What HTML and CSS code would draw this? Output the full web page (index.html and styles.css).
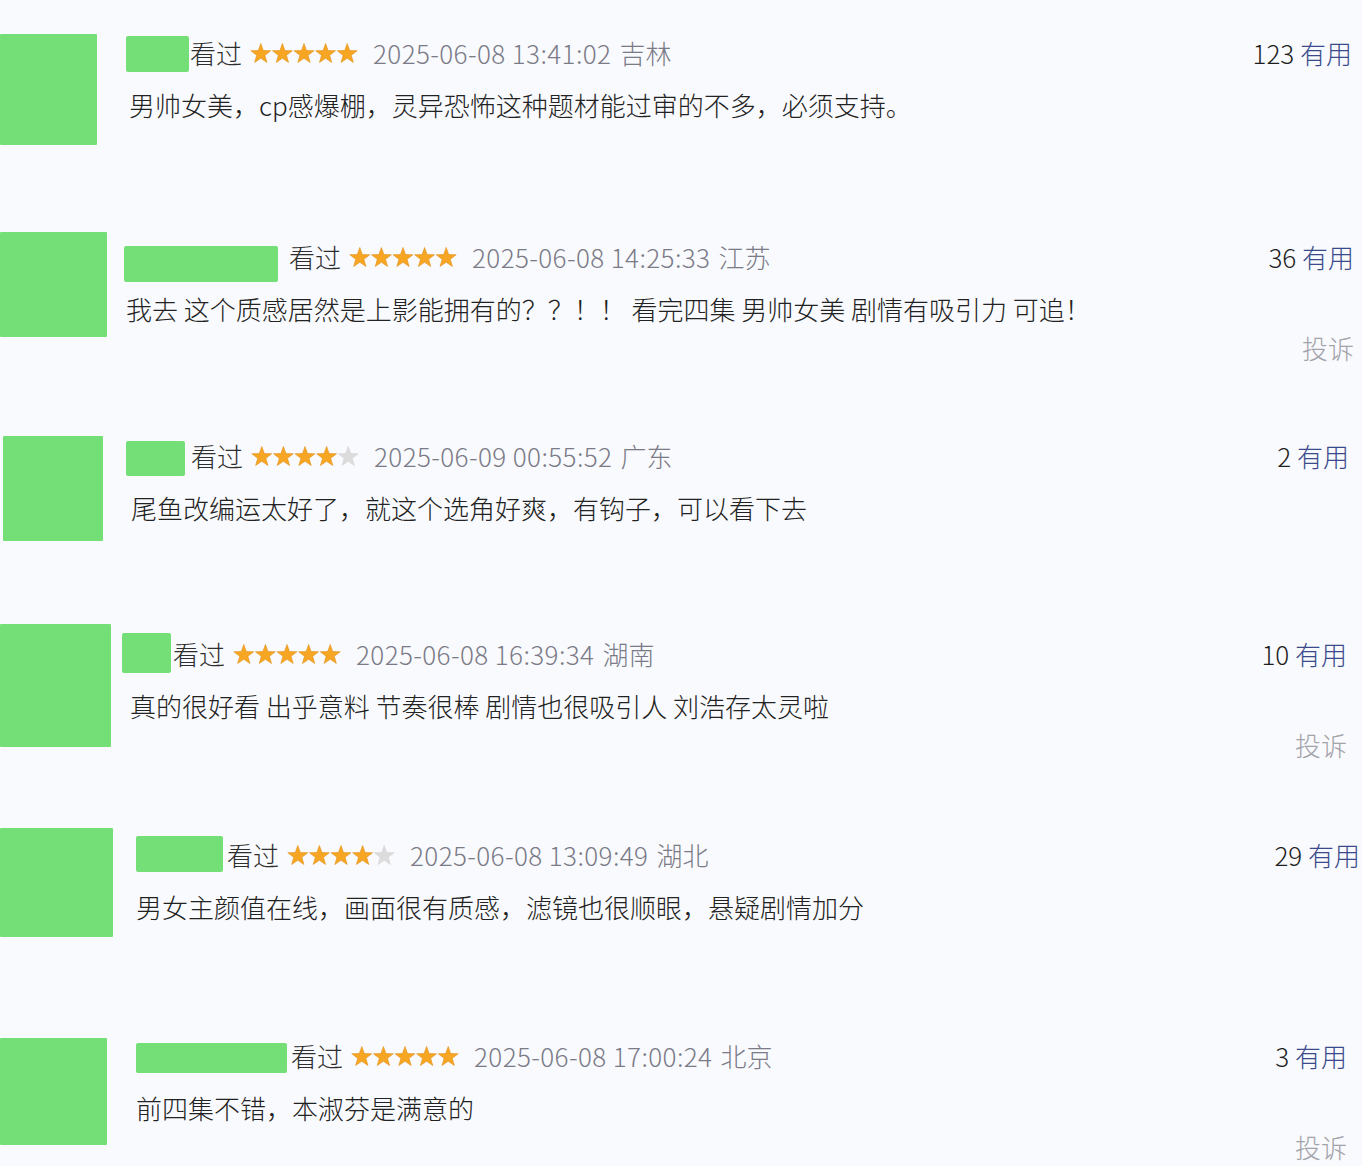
FILE: index.html
```html
<!DOCTYPE html>
<html lang="zh-CN">
<head>
<meta charset="utf-8">
<title>短评</title>
<link rel="stylesheet" href="styles.css">
</head>
<body>
<svg class="defs" width="0" height="0" aria-hidden="true">
  <defs>
    <path id="st" d="M0,-10.5 L2.53,-3.48 L9.99,-3.25 L4.09,1.33 L6.17,8.5 L0,4.3 L-6.17,8.5 L-4.09,1.33 L-9.99,-3.25 L-2.53,-3.48Z"/>
  </defs>
</svg>
<div class="list">

  <div class="item r1">
    <div class="avatar"></div>
    <div class="main">
      <div class="head">
        <span class="name"></span><span class="seen">看过</span>
        <svg class="stars" viewBox="0 0 108 21" width="108" height="21"><use href="#st" class="on" x="10.8" y="11"/><use href="#st" class="on" x="32.4" y="11"/><use href="#st" class="on" x="54" y="11"/><use href="#st" class="on" x="75.6" y="11"/><use href="#st" class="on" x="97.2" y="11"/></svg>
        <span class="time">2025-06-08 13:41:02</span><span class="loc">吉林</span>
      </div>
      <p class="text">男帅女美，cp感爆棚，灵异恐怖这种题材能过审的不多，必须支持。</p>
    </div>
    <div class="side">
      <div class="vote"><span class="num">123</span> <span class="useful">有用</span></div>
    </div>
  </div>

  <div class="item r2">
    <div class="avatar"></div>
    <div class="main">
      <div class="head">
        <span class="name"></span><span class="seen">看过</span>
        <svg class="stars" viewBox="0 0 108 21" width="108" height="21"><use href="#st" class="on" x="10.8" y="11"/><use href="#st" class="on" x="32.4" y="11"/><use href="#st" class="on" x="54" y="11"/><use href="#st" class="on" x="75.6" y="11"/><use href="#st" class="on" x="97.2" y="11"/></svg>
        <span class="time">2025-06-08 14:25:33</span><span class="loc">江苏</span>
      </div>
      <p class="text">我去 这个质感居然是上影能拥有的？？！！ 看完四集 男帅女美 剧情有吸引力 可追！</p>
    </div>
    <div class="side">
      <div class="vote"><span class="num">36</span> <span class="useful">有用</span></div>
      <div class="report">投诉</div>
    </div>
  </div>

  <div class="item r3">
    <div class="avatar"></div>
    <div class="main">
      <div class="head">
        <span class="name"></span><span class="seen">看过</span>
        <svg class="stars" viewBox="0 0 108 21" width="108" height="21"><use href="#st" class="on" x="10.8" y="11"/><use href="#st" class="on" x="32.4" y="11"/><use href="#st" class="on" x="54" y="11"/><use href="#st" class="on" x="75.6" y="11"/><use href="#st" class="off" x="97.2" y="11"/></svg>
        <span class="time">2025-06-09 00:55:52</span><span class="loc">广东</span>
      </div>
      <p class="text">尾鱼改编运太好了，就这个选角好爽，有钩子，可以看下去</p>
    </div>
    <div class="side">
      <div class="vote"><span class="num">2</span> <span class="useful">有用</span></div>
    </div>
  </div>

  <div class="item r4">
    <div class="avatar"></div>
    <div class="main">
      <div class="head">
        <span class="name"></span><span class="seen">看过</span>
        <svg class="stars" viewBox="0 0 108 21" width="108" height="21"><use href="#st" class="on" x="10.8" y="11"/><use href="#st" class="on" x="32.4" y="11"/><use href="#st" class="on" x="54" y="11"/><use href="#st" class="on" x="75.6" y="11"/><use href="#st" class="on" x="97.2" y="11"/></svg>
        <span class="time">2025-06-08 16:39:34</span><span class="loc">湖南</span>
      </div>
      <p class="text">真的很好看 出乎意料 节奏很棒 剧情也很吸引人 刘浩存太灵啦</p>
    </div>
    <div class="side">
      <div class="vote"><span class="num">10</span> <span class="useful">有用</span></div>
      <div class="report">投诉</div>
    </div>
  </div>

  <div class="item r5">
    <div class="avatar"></div>
    <div class="main">
      <div class="head">
        <span class="name"></span><span class="seen">看过</span>
        <svg class="stars" viewBox="0 0 108 21" width="108" height="21"><use href="#st" class="on" x="10.8" y="11"/><use href="#st" class="on" x="32.4" y="11"/><use href="#st" class="on" x="54" y="11"/><use href="#st" class="on" x="75.6" y="11"/><use href="#st" class="off" x="97.2" y="11"/></svg>
        <span class="time">2025-06-08 13:09:49</span><span class="loc">湖北</span>
      </div>
      <p class="text">男女主颜值在线，画面很有质感，滤镜也很顺眼，悬疑剧情加分</p>
    </div>
    <div class="side">
      <div class="vote"><span class="num">29</span> <span class="useful">有用</span></div>
    </div>
  </div>

  <div class="item r6">
    <div class="avatar"></div>
    <div class="main">
      <div class="head">
        <span class="name"></span><span class="seen">看过</span>
        <svg class="stars" viewBox="0 0 108 21" width="108" height="21"><use href="#st" class="on" x="10.8" y="11"/><use href="#st" class="on" x="32.4" y="11"/><use href="#st" class="on" x="54" y="11"/><use href="#st" class="on" x="75.6" y="11"/><use href="#st" class="on" x="97.2" y="11"/></svg>
        <span class="time">2025-06-08 17:00:24</span><span class="loc">北京</span>
      </div>
      <p class="text">前四集不错，本淑芬是满意的</p>
    </div>
    <div class="side">
      <div class="vote"><span class="num">3</span> <span class="useful">有用</span></div>
      <div class="report">投诉</div>
    </div>
  </div>

</div>
</body>
</html>
```

FILE: styles.css
```css
html, body {
  margin: 0;
  padding: 0;
  background: #f9fafd;
}
body {
  font-family: "Noto Sans CJK SC", "Noto Sans", sans-serif;
  font-size: 26px;
  font-weight: 300;
  color: #222;
  width: 1362px;
  height: 1166px;
  overflow: hidden;
}
.defs {
  position: absolute;
  width: 0;
  height: 0;
}
.list {
  padding-top: 34px;
}
.item {
  display: flex;
  align-items: flex-start;
  height: var(--rowh);
}
.avatar {
  flex: none;
  width: var(--aw);
  height: var(--ah);
  margin-left: var(--al, 0px);
  background: #74df76;
  border-radius: 1px;
}
.main {
  flex: 1;
  padding-left: var(--gap);
  padding-top: calc(var(--ht) - 1px);
}
.head {
  display: flex;
  align-items: center;
  height: 36px;
  line-height: 36px;
  white-space: nowrap;
}
.name {
  flex: none;
  align-self: flex-start;
  width: var(--nw);
  height: var(--nh, 36px);
  margin-top: calc(var(--nt, 0px) + 1px);
  margin-right: var(--ng, 2px);
  background: #74df76;
  border-radius: 2px;
}
.seen {
  color: #2e2e2e;
}
.stars {
  display: block;
  margin-left: 8px;
}
.stars .on {
  fill: #f6a623;
  stroke: #e3901a;
  stroke-width: 0.6;
}
.stars .off {
  fill: #dcdcdc;
  stroke: #d0d0d0;
  stroke-width: 0.5;
}
.time {
  margin-left: 15px;
  letter-spacing: 0.4px;
  color: #7b7b88;
}
.loc {
  margin-left: 8px;
  color: #7b7b88;
}
.text {
  margin: 16px 0 0;
  padding-left: var(--tx, 3px);
  line-height: 36px;
  color: #222;
  white-space: nowrap;
}
.side {
  flex: none;
  display: flex;
  flex-direction: column;
  align-items: flex-end;
  padding-top: calc(var(--ht) - 1px);
  padding-right: var(--sr);
}
.vote {
  line-height: 36px;
  white-space: nowrap;
}
.num {
  color: #1e1e1e;
}
.useful {
  color: #3a4a8c;
}
.report {
  margin-top: 55px;
  line-height: 36px;
  color: #a3a3aa;
}

.r1 { --rowh: 198px; --aw: 97px; --ah: 111px; --gap: 29px; --ht: 2px; --nw: 63px; --nt: 0px; --ng: 1px; --tx: 3px; --sr: 10px; }
.r2 { --rowh: 204px; --aw: 107px; --ah: 105px; --gap: 17px; --ht: 8px; --nw: 154px; --nt: 6px; --ng: 11px; --tx: 2px; --sr: 8px; }
.r3 { --rowh: 188px; --aw: 100px; --ah: 105px; --al: 3px; --gap: 23px; --ht: 3px; --nw: 59px; --nt: 2px; --nh: 35px; --ng: 6px; --tx: 5px; --sr: 13px; }
.r4 { --rowh: 204px; --aw: 111px; --ah: 123px; --gap: 11px; --ht: 13px; --nw: 49px; --nt: -4px; --nh: 40px; --ng: 2px; --tx: 8px; --sr: 15px; }
.r5 { --rowh: 210px; --aw: 113px; --ah: 109px; --gap: 23px; --ht: 10px; --nw: 87px; --nt: -2px; --ng: 4px; --tx: 0px; --sr: 2px; }
.r6 { --rowh: 128px; --aw: 107px; --ah: 107px; --gap: 29px; --ht: 0px; --nw: 151px; --nt: 4px; --nh: 30px; --ng: 4px; --tx: 0px; --sr: 15px; }
```
